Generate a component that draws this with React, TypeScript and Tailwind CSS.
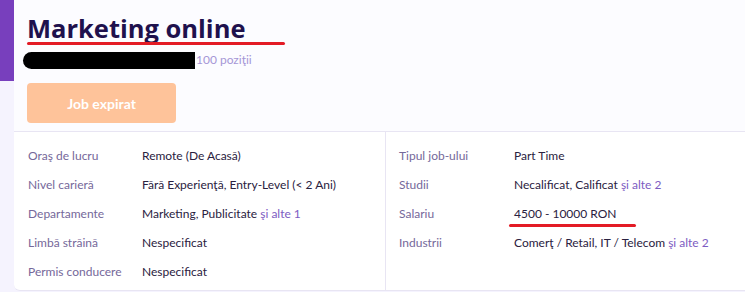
const rowsLeft: { label: string; value: string; more?: string }[] = [
  { label: 'Oraş de lucru', value: 'Remote (De Acasă)' },
  { label: 'Nivel carieră', value: 'Fără Experienţă, Entry-Level (< 2 Ani)' },
  { label: 'Departamente', value: 'Marketing, Publicitate', more: 'şi alte 1' },
  { label: 'Limbă străină', value: 'Nespecificat' },
  { label: 'Permis conducere', value: 'Nespecificat' },
];

const rowsRight: { label: string; value: string; more?: string; mark?: boolean }[] = [
  { label: 'Tipul job-ului', value: 'Part Time' },
  { label: 'Studii', value: 'Necalificat, Calificat', more: 'şi alte 2' },
  { label: 'Salariu', value: '4500 - 10000 RON', mark: true },
  { label: 'Industrii', value: 'Comerţ / Retail, IT / Telecom', more: 'şi alte 2' },
];

const Row = (props: { label: string; value: string; more?: string; mark?: boolean; labelW: string }) => (
  <div className="flex h-[29px] items-center text-[12px]">
    <div className={`${props.labelW} shrink-0 text-[#75689a]`}>{props.label}</div>
    <div className="relative text-[#2a2140]">
      {props.value}
      {props.more && <span className="text-[#7d5cc2]"> {props.more}</span>}
      {props.mark && (
        <span className="absolute left-[-5px] top-[19px] h-[3px] w-[127px] rounded-full bg-[#e31b25]" />
      )}
    </div>
  </div>
);

export default function App() {
  return (
    <div
      className="flex h-[292px] w-[745px] bg-[#f5f3fe]"
      style={{ fontFamily: 'Lato, "Open Sans", sans-serif' }}
    >
      <div className="w-[14px] shrink-0">
        <div className="h-[81px] bg-[#783fbd]" />
      </div>
      <div className="flex h-[291px] flex-1 flex-col overflow-hidden rounded-bl-md border-b border-[#e8e5f3] bg-white">
        <div className="h-[132px] shrink-0 border-b border-[#e8e5f3] bg-[#fcfcff] pl-[13px] pt-[13px]">
          <div className="relative inline-block">
            <h1
              className="text-[25.5px] font-bold leading-[30px] text-[#1f114d]"
              style={{ fontFamily: '"Open Sans", sans-serif' }}
            >
              Marketing online
            </h1>
            <span className="absolute left-[0px] top-[29px] h-[3px] w-[258px] rounded-full bg-[#e31b25]" />
          </div>
          <div className="mt-[7px] flex items-center">
            <span className="ml-[-4px] h-[17px] w-[172px] rounded-l-full bg-black" />
            <span className="ml-[1px] text-[12px] text-[#a596d6]">100 poziţii</span>
          </div>
          <button className="mt-[14px] h-[40px] w-[149px] rounded-[4px] bg-[#fec39a] text-[14px] font-bold text-white">
            Job expirat
          </button>
        </div>
        <div className="flex flex-1">
          <div className="w-[372px] border-r border-[#e8e5f3] pl-[14px] pt-[9px]">
            {rowsLeft.map((r) => (
              <Row key={r.label} {...r} labelW="w-[114px]" />
            ))}
          </div>
          <div className="flex-1 pl-[13px] pt-[9px]">
            {rowsRight.map((r) => (
              <Row key={r.label} {...r} labelW="w-[115px]" />
            ))}
          </div>
        </div>
      </div>
    </div>
  );
}
